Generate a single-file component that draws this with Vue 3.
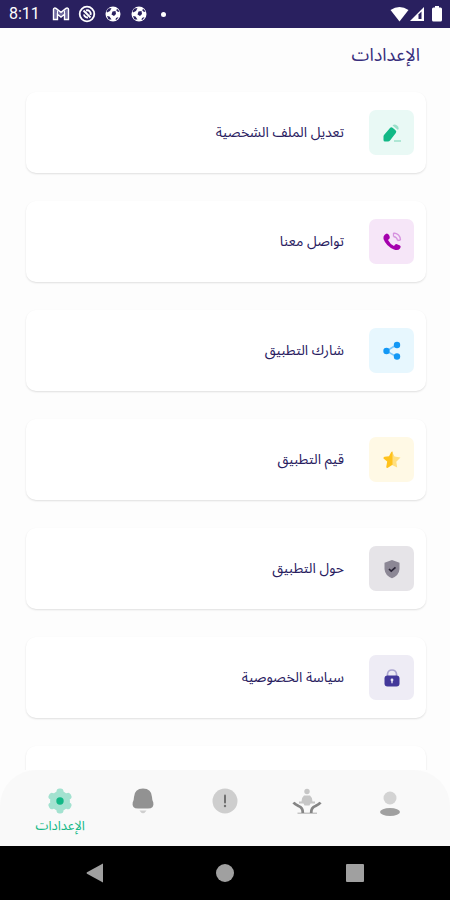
<script setup>
import { ref } from 'vue'

const items = [
  { id: 'edit', label: 'تعديل الملف الشخصية' },
  { id: 'call', label: 'تواصل معنا' },
  { id: 'share', label: 'شارك التطبيق' },
  { id: 'rate', label: 'قيم التطبيق' },
  { id: 'about', label: 'حول التطبيق' },
  { id: 'privacy', label: 'سياسة الخصوصية' },
]

const tabs = [
  { id: 'profile' },
  { id: 'donate' },
  { id: 'info' },
  { id: 'alerts' },
  { id: 'settings', label: 'الإعدادات' },
]

const active = ref('settings')
</script>

<template>
  <div class="app" dir="rtl">
    <header class="status" dir="ltr">
      <span class="clock">8:11</span>
      <div class="notices">
        <svg width="18" height="16" viewBox="0 0 18 16">
          <path d="M1.5 13.5V3.2C1.5 2 3 1.6 4 2.4L9 6.4L14 2.4C15 1.6 16.5 2 16.5 3.2V13.5H12.5V8.3L9 11L5.5 8.3V13.5Z" fill="#6f6a9f" stroke="#fff" stroke-width="1.400" />
          <path d="M5.5 8V4.500M12.5 8V4.500" stroke="#fff" stroke-width="1" />
        </svg>
        <svg width="18" height="18" viewBox="0 0 18 18">
          <circle cx="9" cy="9" r="7.300" fill="none" stroke="#fff" stroke-width="1.800" />
          <path d="M5.500 5.500L12.500 12.500M6 9.500A3.500 3.500 0 0 0 10 12.500M8 5.500A3.500 3.500 0 0 1 12.500 10M8 8L10 10" fill="none" stroke="#fff" stroke-width="1.900" />
        </svg>
        <svg v-for="n in 2" :key="n" width="18" height="18" viewBox="0 0 18 18">
          <circle cx="9" cy="9" r="7.500" fill="#fff" />
          <path d="M8.500 6.500L11.500 6L12 9L10 11L7.500 9.500ZM4.500 3.500L7.500 3L6 6L3 7.500L2.500 6ZM3 11L5.500 11.500L7.500 14.500L4.500 14.500ZM13.500 4L15.500 6.500L14 7L12 5ZM12 13L14.500 12L13 14.500L11.500 15Z" fill="#29205f" />
        </svg>
        <span class="more"></span>
      </div>
      <div class="signals">
        <svg width="19" height="16" viewBox="0 0 19 16"><path d="M.500 4Q9.500-2 18.500 4L9.500 15.500Z" fill="#fff" /></svg>
        <svg width="16" height="16" viewBox="0 0 16 16">
          <path d="M1 15L15 1V15Z" fill="#fff" />
          <path d="M9.500 8.500L12.500 5.500V13H9.500Z" fill="#29205f" />
        </svg>
        <svg class="battery" width="10" height="16" viewBox="0 0 10 16"><path d="M3 0H7V1.500H8.500Q10 1.500 10 3V14Q10 15.500 8.500 15.500H1.500Q0 15.500 0 14V3Q0 1.500 1.500 1.500H3Z" fill="#fff" /></svg>
      </div>
    </header>

    <main class="content">
      <h1 class="title">الإعدادات</h1>
      <ul class="list">
        <li v-for="item in items" :key="item.id">
          <button class="card" type="button">
            <span class="tile" :class="item.id">
              <svg v-if="item.id === 'edit'" width="24" height="24" viewBox="0 0 24 24">
                <path d="M4 14L10 7Q11.200 5.700 12.600 6.800L15.500 9.200Q17 10.500 15.800 12L10 19.500Q9.300 20.500 8 20.500H5Q3.500 20.500 3.500 19V15.500Q3.500 14.700 4 14Z" fill="#12b886" />
                <path d="M12.500 4.500Q14.500 2.500 17 4.500L18 5.500Q19.500 7.300 18 9Z" fill="#9be0ca" />
                <path d="M14 20H21" stroke="#9be0ca" stroke-width="1.500" />
              </svg>
              <svg v-else-if="item.id === 'call'" width="24" height="24" viewBox="0 0 24 24">
                <path d="M4.500 5Q7 2 9 5L9.800 7Q10.200 8.500 8 10Q10 14 14 16Q15.500 13.500 17 14.200L20 15.500Q21.500 16.500 20 18.500Q18 21 14 19.500Q6 16 3.500 9Q3 6.500 4.500 5Z" fill="#a500ad" />
                <path d="M13.500 3Q20 3.500 20.500 10M13.500 6.500Q17 7 17.500 10.500M13.500 3V6.500M17.500 10.500L20.500 10" fill="none" stroke="#d692df" stroke-width="1.300" />
              </svg>
              <svg v-else-if="item.id === 'share'" width="24" height="24" viewBox="0 0 24 24">
                <path d="M17 5.500L6.500 12L17 18" fill="none" stroke="#7cc8fb" stroke-width="1.500" />
                <g fill="#1398f5"><circle cx="17" cy="6" r="3.200" /><circle cx="6.500" cy="12" r="3.200" /><circle cx="17" cy="17.500" r="3.200" /></g>
              </svg>
              <svg v-else-if="item.id === 'rate'" width="24" height="24" viewBox="0 0 24 24">
                <path d="M12 3.500L14.500 8.500L20.500 9.500L16.300 13.700L17.200 19.500L12 17Z" fill="#ffdf80" />
                <path d="M12.500 3.500V16.800L7.500 20Q6 20 6.300 18.500L7.200 13.500L3.500 10.500Q3 9.200 4.500 8.800L9 8.300L11 4.500Q11.500 3.500 12.500 3.500Z" fill="#ffc21c" />
              </svg>
              <svg v-else-if="item.id === 'about'" width="24" height="24" viewBox="0 0 24 24">
                <path d="M12 3L19.500 5.800V12Q19 18.500 12 21.200Q5 18.500 4.500 12V5.800Z" fill="#8c8795" />
                <path d="M9 12L11.200 14.200L15.500 10.300" fill="none" stroke="#292435" stroke-width="1.700" />
              </svg>
              <svg v-else width="24" height="24" viewBox="0 0 24 24">
                <path d="M7.500 10V8Q8 4 12 4Q16 4 16.500 8V10" fill="none" stroke="#aaa5d0" stroke-width="1.700" />
                <rect x="4.500" y="9.500" width="15" height="11" rx="3" fill="#43389a" />
                <circle cx="12" cy="14" r="1.400" fill="#e8e6f5" /><path d="M12 14V17.300" stroke="#e8e6f5" stroke-width="1.300" />
              </svg>
            </span>
            <span class="label">{{ item.label }}</span>
          </button>
        </li>
        <li class="card"></li>
      </ul>
    </main>

    <nav class="tabs">
      <button v-for="tab in tabs" :key="tab.id" class="tab" :class="{ active: active === tab.id }" type="button" @click="active = tab.id">
        <svg v-if="tab.id === 'profile'" width="30" height="30" viewBox="0 0 30 30">
          <circle cx="15" cy="12" r="6.500" fill="#d3d3d3" />
          <ellipse cx="15" cy="26" rx="10" ry="4" fill="#a0a0a0" />
        </svg>
        <svg v-else-if="tab.id === 'donate'" width="30" height="30" viewBox="0 0 30 30">
          <g fill="#c6c6c6">
            <circle cx="15" cy="5.500" r="2.700" />
            <path d="M12 9.500H18Q20.500 11.500 20.500 15.500H23V17.500H18.500L17.500 19.500H12.500L11.500 17.500H7V15.500H9.500Q9.500 11.500 12 9.500Z" />
            <path d="M5.500 26.500H25V28H5.500Z" />
          </g>
          <path d="M1.500 16.500Q3 18.500 6.500 20Q11 21.500 10.800 27M28.500 16.500Q27 18.500 23.500 20Q19 21.500 19.200 27" fill="none" stroke="#858585" stroke-width="2.800" />
        </svg>
        <svg v-else-if="tab.id === 'info'" width="30" height="30" viewBox="0 0 30 30">
          <circle cx="15" cy="15" r="12.500" fill="#cecece" />
          <path d="M15 9.500V16.500" stroke="#707070" stroke-width="2" stroke-linecap="round" />
          <circle cx="15" cy="20" r="1.200" fill="#707070" />
        </svg>
        <svg v-else-if="tab.id === 'alerts'" width="30" height="30" viewBox="0 0 30 30">
          <path d="M15 2.500Q23.500 2.500 24 11Q24 13.500 25.300 16.500Q26.500 22.500 20 22.500H10Q3.500 22.500 4.700 16.500Q6 13.500 6 11Q6.500 2.500 15 2.500Z" fill="#929292" />
          <path d="M11.500 24.500H18.500Q15 30 11.500 24.500Z" fill="#cfcfcf" />
        </svg>
        <svg v-else width="30" height="30" viewBox="0 0 30 30">
          <g fill="#a3e2d0">
            <circle cx="15" cy="15" r="10" />
            <rect v-for="a in 3" :key="a" x="11.500" y="2.500" width="7" height="25" rx="3" :transform="`rotate(${a * 60} 15 15)`" />
          </g>
          <circle cx="15" cy="15" r="3.700" fill="#12b886" />
        </svg>
        <span v-if="tab.label">{{ tab.label }}</span>
      </button>
    </nav>

    <footer class="system" dir="ltr">
      <button type="button"><svg width="22" height="22" viewBox="0 0 22 22"><path d="M19 1.500V20.500L3 11.700Q2 11 3 10.300Z" fill="#a0a0a0" /></svg></button>
      <button type="button"><svg width="22" height="22" viewBox="0 0 22 22"><circle cx="11" cy="11" r="9" fill="#a0a0a0" /></svg></button>
      <button type="button"><svg width="22" height="22" viewBox="0 0 22 22"><rect x="2" y="2" width="18" height="18" rx="1" fill="#a0a0a0" /></svg></button>
    </footer>
  </div>
</template>

<style>
body {
  margin: 0;
  background: #fdfdfd;
}
</style>

<style scoped>
.app {
  display: flex;
  flex-direction: column;
  height: 100vh;
  background: #fdfdfd;
  color: #29205f;
  font-family: "Noto Sans Arabic", "DejaVu Sans", sans-serif;
}
svg {
  display: block;
  flex: none;
}
button {
  border: 0;
  background: none;
  padding: 0;
  color: inherit;
  font: inherit;
}
.status {
  display: flex;
  align-items: center;
  height: 28px;
  flex: none;
  padding: 0 8px 0 9px;
  background: #29205f;
  color: #fff;
}
.clock {
  font: 16px/28px Roboto, sans-serif;
}
.notices {
  display: flex;
  align-items: center;
  gap: 8px;
  margin-left: 12px;
}
.more {
  width: 5px;
  height: 5px;
  margin-left: 5px;
  border-radius: 50%;
  background: #fff;
}
.signals {
  display: flex;
  align-items: center;
  margin-left: auto;
}
.battery {
  margin-left: 7px;
}
.content {
  flex: 1;
  min-height: 0;
  overflow-y: auto;
  scrollbar-width: none;
}
.title {
  margin: 0;
  padding: 11px 30px 0;
  color: #382e7c;
  font-size: 18px;
  line-height: 32px;
  font-weight: 400;
}
.list {
  display: flex;
  flex-direction: column;
  gap: 28px;
  margin: 0;
  padding: 21px 24px 28px 26px;
  list-style: none;
}
.card {
  display: flex;
  align-items: center;
  gap: 25px;
  box-sizing: border-box;
  width: 100%;
  height: 81px;
  padding: 0 12px;
  border-radius: 10px;
  background: #fff;
  box-shadow: 0 1px 2px rgba(0, 0, 0, 0.12);
}
.tile {
  display: flex;
  align-items: center;
  justify-content: center;
  width: 45px;
  height: 45px;
  border-radius: 7px;
}
.edit { background: #e9f9f5; }
.call { background: #f6e6f8; }
.share { background: #e7f7fe; }
.rate { background: #fff9e5; }
.about { background: #e6e4e8; }
.privacy { background: #eeecf5; }
.label {
  font-size: 14px;
  line-height: 24px;
}
.tabs {
  display: grid;
  grid-template-columns: repeat(5, 1fr);
  flex: none;
  height: 76px;
  box-sizing: border-box;
  padding: 16px 19px 0;
  border-radius: 36px 36px 0 0;
  background: #f9f9f9;
}
.tab {
  display: flex;
  flex-direction: column;
  align-items: center;
  font-size: 13px;
  line-height: 20px;
}
.active {
  color: #12b886;
}
.system {
  display: flex;
  align-items: center;
  justify-content: space-between;
  flex: none;
  height: 54px;
  padding: 0 84px;
  background: #000;
}
</style>
